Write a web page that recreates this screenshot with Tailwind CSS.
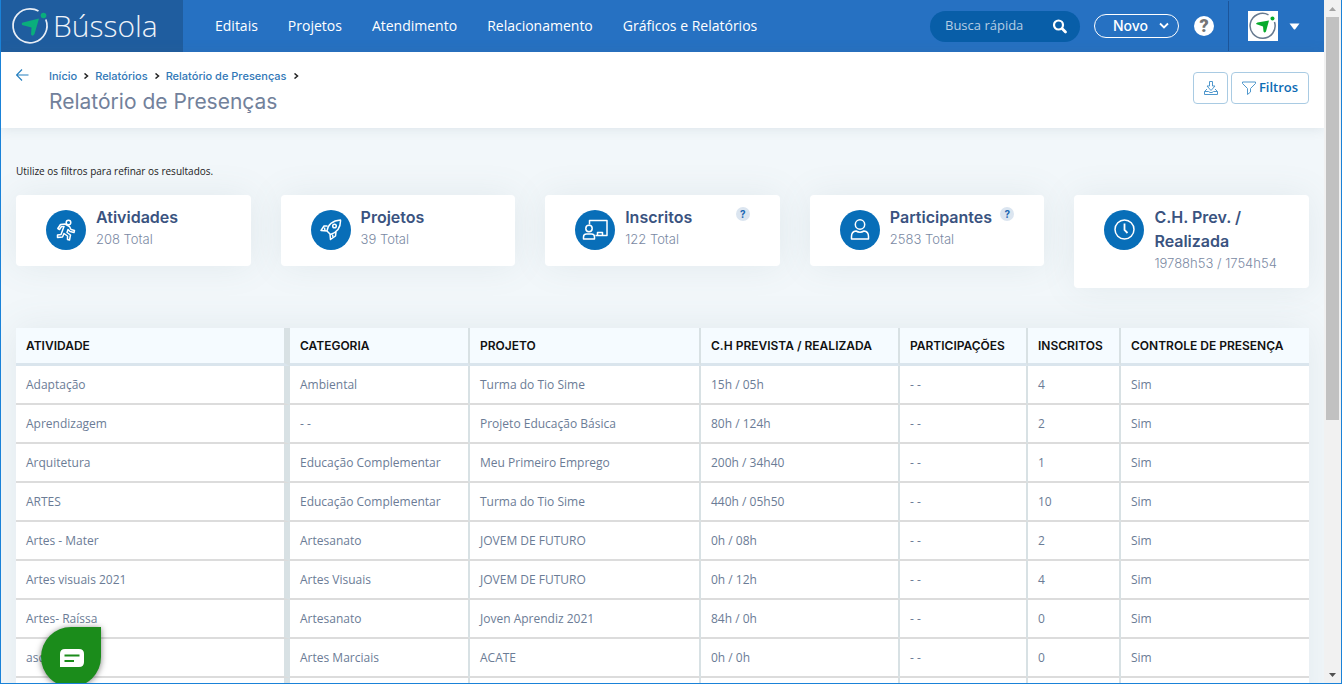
<!DOCTYPE html>
<html lang="pt-BR">
<head>
  <meta charset="UTF-8">
  <meta name="viewport" content="width=device-width, initial-scale=1.0">
  <title>Relatório de Presenças</title>
  <script src="https://cdn.jsdelivr.net/npm/@tailwindcss/browser@4"></script>
</head>
<body class="flex h-screen overflow-hidden border-x border-b border-[#1a82d8] bg-[#f2f7fa] font-['Open_Sans',sans-serif]">

  <div class="flex min-w-0 flex-1 flex-col overflow-hidden">

    <!-- Top bar -->
    <header class="flex h-[52px] shrink-0 items-stretch bg-[#2671c2] text-white">
      <a href="#" class="flex w-[182px] shrink-0 items-center gap-[2px] bg-[#1f5d9f] pl-[10px]">
        <svg class="size-10 shrink-0" viewBox="0 0 40 40" fill="none" aria-hidden="true">
          <path d="M27.500 5Q24 2.800 19 2.800A17 17 0 1 0 34.800 13.500" stroke="#e8eef6" stroke-width="1.700"/>
          <path d="M11 19Q10 16.500 13 16.300L28 12.500L23.500 28Q21.500 31 20 28.500L20.500 21.500Z" fill="#0aae7c"/>
          <circle cx="32.500" cy="9.500" r="2.800" fill="#0aae7c"/>
        </svg>
        <span class="text-[30px] font-light leading-10 text-[#eef3f9]">Bússola</span>
      </a>

      <nav class="flex items-center gap-[30px] pl-8 text-sm">
        <a href="#">Editais</a>
        <a href="#">Projetos</a>
        <a href="#">Atendimento</a>
        <a href="#">Relacionamento</a>
        <a href="#">Gráficos e Relatórios</a>
      </nav>

      <div class="ml-auto flex items-center">
        <form class="flex h-[31px] w-[150px] items-center rounded-full bg-[#085ea8] pl-[15px] pr-3">
          <input type="search" aria-label="Busca rápida" placeholder="Busca rápida" class="min-w-0 flex-1 bg-transparent text-[13px] outline-none placeholder:text-[#b5cde4]">
          <button type="button" aria-label="Buscar">
            <svg class="size-4" viewBox="0 0 16 16" fill="none" stroke="#fff" stroke-linecap="round">
              <circle cx="6.500" cy="7" r="4.500" stroke-width="2.200"/>
              <path d="M10.300 10.800L13.500 14" stroke-width="2.800"/>
            </svg>
          </button>
        </form>
        <button type="button" class="ml-[14px] flex h-6 w-[85px] items-center justify-between rounded-full border border-white pl-[18px] pr-[9px] font-['Inter',sans-serif] text-sm font-medium">
          Novo
          <svg class="size-[10px]" viewBox="0 0 10 10" fill="none" stroke="#fff" stroke-width="1.800" aria-hidden="true"><path d="M1 2.500L5 6.500L9 2.500"/></svg>
        </button>
        <button type="button" aria-label="Ajuda" class="ml-[15px] flex size-5 items-center justify-center rounded-full bg-white font-['Roboto',sans-serif] text-lg font-black leading-5 text-[#757575]">?</button>
        <div class="ml-[14px] h-[50px] w-px bg-[#1c559a]"></div>
        <button type="button" aria-label="Conta" class="ml-[19px] mr-6 flex items-center gap-[11px]">
          <svg class="size-[30px] bg-white" viewBox="0 0 30 30" fill="none" aria-hidden="true">
            <path d="M20.500 3.800A12.500 12.500 0 1 0 26.500 11" stroke="#66798f" stroke-width="1.500"/>
            <path d="M8 13Q8 12 9.500 11.500L21 9.500L18 20.500Q16.500 22.500 15.500 20.500L15 15.500Z" fill="#07ab2c"/>
            <circle cx="24.500" cy="7.500" r="2" fill="#07ab2c"/>
          </svg>
          <svg class="h-[7px] w-[11px]" viewBox="0 0 11 7" fill="#fff" aria-hidden="true"><path d="M0.500 0.500H10.500L6.200 6.200Q5.500 7 4.800 6.200Z"/></svg>
        </button>
      </div>
    </header>

    <!-- Page heading -->
    <div class="flex h-[76px] shrink-0 items-start justify-between bg-white px-[15px] shadow-[0_0_12px_rgba(70,100,120,0.14)]">
      <div class="flex gap-5 pt-[15px]">
        <a href="#" aria-label="Voltar" class="pt-[2px]">
          <svg class="h-3 w-[13px]" viewBox="0 0 13 12" fill="none" stroke="#2680c0" stroke-width="1.200"><path d="M12.500 6H0.500M6 0.500L0.500 6L6 11.500"/></svg>
        </a>
        <div class="font-['Inter',sans-serif]">
          <nav class="flex h-[18px] items-center gap-[6px] text-[11px] font-medium text-[#3178b7]">
            <a href="#">Início</a>
            <svg class="size-[6px]" viewBox="0 0 6 6" fill="none" stroke="#222" stroke-width="1.500"><path d="M1.500 0.500L4.500 3L1.500 5.500"/></svg>
            <a href="#">Relatórios</a>
            <svg class="size-[6px]" viewBox="0 0 6 6" fill="none" stroke="#222" stroke-width="1.500"><path d="M1.500 0.500L4.500 3L1.500 5.500"/></svg>
            <a href="#">Relatório de Presenças</a>
            <svg class="size-[6px]" viewBox="0 0 6 6" fill="none" stroke="#222" stroke-width="1.500"><path d="M1.500 0.500L4.500 3L1.500 5.500"/></svg>
          </nav>
          <h1 class="pt-[2px] text-[21px] leading-[30px] text-[#72819b]">Relatório de Presenças</h1>
        </div>
      </div>
      <div class="flex gap-[3px] pt-5">
        <button type="button" aria-label="Exportar" class="flex h-8 w-[35px] items-center justify-center rounded border border-[#a9cbe3]">
          <svg class="size-[14px]" viewBox="0 0 14 14" fill="none" stroke="#4f97cc" stroke-width="1" stroke-linejoin="round">
            <path d="M5.500 0.500H8.500V5H11L7 9.500L3 5H5.500ZM3 8L0.500 10.500V13.500H13.500V10.500L11 8M0.500 10.500H4.500L6 11.500H8L9.500 10.500H13.500"/>
          </svg>
        </button>
        <button type="button" class="flex h-8 w-[78px] items-center justify-center gap-[3px] rounded border border-[#a9cbe3] text-[13px] font-semibold text-[#0d6cb4]">
          <svg class="size-[14px]" viewBox="0 0 14 14" fill="none" stroke="#4f97cc" stroke-width="1" stroke-linejoin="round" aria-hidden="true"><path d="M0.500 1H13.500V2.500L8.500 7.500V11L5.500 13.500V7.500L0.500 2.500Z"/></svg>
          Filtros
        </button>
      </div>
    </div>

    <main class="px-[15px] pt-[35px]">
      <p class="text-[10px] leading-4 text-[#222]">Utilize os filtros para refinar os resultados.</p>

      <!-- Totals -->
      <section class="mt-4 grid min-h-[93px] grid-cols-5 items-start gap-[30px] font-['Inter',sans-serif]">
        <article class="flex gap-[10px] rounded bg-white px-[30px] shadow-[0_0_35px_rgba(100,130,140,0.11)]">
          <div class="mb-4 mt-[15px] flex size-10 shrink-0 items-center justify-center rounded-full bg-[#086eb8]">
            <svg class="size-[22px]" viewBox="0 0 22 22" fill="none" stroke="#fff" stroke-width="1.500" stroke-linejoin="round" aria-hidden="true">
              <circle cx="13.500" cy="3.500" r="2.300"/>
              <path d="M5.500 5.500L10 5L14.500 7.500L16 10.500L19.500 11.500L19 13.500L15 12.500L13 10.500L12 13.500L15.500 16L14.500 21L12.500 20.500L12.500 17L9 14.500L7.500 18L2.500 18.500L2.500 16L6 15.500L9 7.500L6.500 7.500L4.500 10.500L2.800 9.500Z"/>
            </svg>
          </div>
          <div class="pb-[15px] pt-[10px]">
            <h2 class="text-base font-semibold leading-6 text-[#3a5380]">Atividades</h2>
            <p class="text-[13px] font-light leading-5 text-[#7a89a3]">208 Total</p>
          </div>
        </article>

        <article class="flex gap-[10px] rounded bg-white px-[30px] shadow-[0_0_35px_rgba(100,130,140,0.11)]">
          <div class="mb-4 mt-[15px] flex size-10 shrink-0 items-center justify-center rounded-full bg-[#086eb8]">
            <svg class="size-[22px]" viewBox="0 0 22 22" fill="none" stroke="#fff" stroke-width="1.500" stroke-linejoin="round" aria-hidden="true">
              <path d="M7 12Q8.500 2 20.500 1Q21 12 10.500 15.500ZM7.500 7H4L1 11.500L7 12M16 13L15.500 17L10.500 20.500L10 15.500"/>
              <circle cx="14.500" cy="7" r="1.800"/>
              <path d="M4.500 8.500L5 12"/>
              <path d="M12.500 15.500L13 18.500"/>
            </svg>
          </div>
          <div class="pb-[15px] pt-[10px]">
            <h2 class="text-base font-semibold leading-6 text-[#3a5380]">Projetos</h2>
            <p class="text-[13px] font-light leading-5 text-[#7a89a3]">39 Total</p>
          </div>
        </article>

        <article class="flex gap-[10px] rounded bg-white px-[30px] shadow-[0_0_35px_rgba(100,130,140,0.11)]">
          <div class="mb-4 mt-[15px] flex size-10 shrink-0 items-center justify-center rounded-full bg-[#086eb8]">
            <svg class="h-[22px] w-[26px]" viewBox="0 0 26 22" fill="none" stroke="#fff" stroke-width="1.500" stroke-linejoin="round" aria-hidden="true">
              <path d="M7.500 5.500V1.500H25V16.500H13.500M15.500 16V13.500H20.500V16"/>
              <circle cx="7" cy="9.500" r="3.200"/>
              <path d="M1.500 20V18Q1.500 15 4.500 15H9.500Q12.500 15 12.500 18V20Z"/>
            </svg>
          </div>
          <div class="pb-[15px] pt-[10px]">
            <h2 class="text-base font-semibold leading-6 text-[#3a5380]">Inscritos</h2>
            <p class="text-[13px] font-light leading-5 text-[#7a89a3]">122 Total</p>
          </div>
          <button type="button" aria-label="Ajuda sobre inscritos" class="ml-auto mt-3 flex size-[14px] shrink-0 items-center justify-center rounded-full bg-[#dbe5f0] text-[10px] font-bold text-[#1c68b3]">?</button>
        </article>

        <article class="flex gap-[5px] rounded bg-white px-[30px] shadow-[0_0_35px_rgba(100,130,140,0.11)]">
          <div class="mb-4 mr-[5px] mt-[15px] flex size-10 shrink-0 items-center justify-center rounded-full bg-[#086eb8]">
            <svg class="size-[22px]" viewBox="0 0 22 22" fill="none" stroke="#fff" stroke-width="1.500" stroke-linejoin="round" aria-hidden="true">
              <circle cx="11" cy="5.500" r="4.700"/>
              <path d="M2.500 20V17.500Q2.500 12.500 7 12Q11 14.500 15 12Q19.500 12.500 19.500 17.500V20Z"/>
            </svg>
          </div>
          <div class="pb-[15px] pt-[10px]">
            <h2 class="text-base font-semibold leading-6 text-[#3a5380]">Participantes</h2>
            <p class="text-[13px] font-light leading-5 text-[#7a89a3]">2583 Total</p>
          </div>
          <button type="button" aria-label="Ajuda sobre participantes" class="ml-auto mt-3 flex size-[14px] shrink-0 items-center justify-center rounded-full bg-[#dbe5f0] text-[10px] font-bold text-[#1c68b3]">?</button>
        </article>

        <article class="flex gap-[10px] rounded bg-white px-[30px] shadow-[0_0_35px_rgba(100,130,140,0.11)]">
          <div class="mb-4 mt-[15px] flex size-10 shrink-0 items-center justify-center rounded-full bg-[#086eb8]">
            <svg class="size-[22px]" viewBox="0 0 22 22" fill="none" stroke="#fff" stroke-width="1.500" aria-hidden="true">
              <circle cx="11.500" cy="10.500" r="9.500"/>
              <path d="M11.500 4.500V11L14.500 14" stroke-width="1.800"/>
            </svg>
          </div>
          <div class="pb-[15px] pt-[10px]">
            <h2 class="text-base font-semibold leading-6 text-[#3a5380]">C.H. Prev. / Realizada</h2>
            <p class="whitespace-nowrap text-[13px] font-light leading-5 text-[#7a89a3]">19788h53 / 1754h54</p>
          </div>
        </article>
      </section>

      <!-- Report table -->
      <table class="mt-10 w-full table-fixed border-separate border-spacing-0 bg-white text-left shadow-[0_0_35px_rgba(100,130,140,0.11)]">
        <colgroup>
          <col class="w-[274px]">
          <col class="w-[180px]">
          <col class="w-[231px]">
          <col class="w-[199px]">
          <col class="w-[128px]">
          <col class="w-[93px]">
          <col>
        </colgroup>
        <thead class="bg-[#f5fbff] font-['Inter',sans-serif] text-xs uppercase text-[#111]">
          <tr class="h-[38px] *:border-b-[3px] *:border-r-2 *:border-b-[#dae5ed] *:border-r-[#d8e1e4] *:pl-[10px] *:font-semibold">
            <th class="border-r-[6px]!">Atividade</th>
            <th>Categoria</th>
            <th>Projeto</th>
            <th>C.H Prevista / Realizada</th>
            <th>Participações</th>
            <th>Inscritos</th>
            <th class="border-r-0!">Controle de presença</th>
          </tr>
        </thead>
        <tbody id="rows" class="text-xs text-[#6b7c96]"></tbody>
      </table>
    </main>
  </div>

  <!-- Scrollbar -->
  <div class="flex w-[17px] shrink-0 flex-col items-center bg-[#f1f1f1]" aria-hidden="true">
    <div class="flex h-[17px] items-center"><svg class="h-1 w-[7px]" viewBox="0 0 7 4" fill="#a3a3a3"><path d="M3.500 0L7 4H0Z"/></svg></div>
    <div class="h-[59%] w-[13px] bg-[#c1c1c1]"></div>
    <div class="mt-auto flex h-[17px] items-center"><svg class="h-1 w-[7px]" viewBox="0 0 7 4" fill="#505050"><path d="M3.500 4L7 0H0Z"/></svg></div>
  </div>

  <!-- Chat button, partly below the fold -->
  <div class="pointer-events-none absolute inset-x-px bottom-px top-0 overflow-hidden">
    <button type="button" aria-label="Abrir chat" class="pointer-events-auto absolute -bottom-1 left-10 flex size-[60px] items-center justify-center rounded-full rounded-tr-[7px] bg-[#1b8c1b] pl-[2px] pt-[2px] shadow-[0_1px_6px_rgba(0,0,0,0.5)]">
      <svg class="h-[18px] w-6" viewBox="0 0 24 18" aria-hidden="true">
        <path d="M5 0H19Q24 0 24 5V13Q24 18 19 18H0V5Q0 0 5 0Z" fill="#fff"/>
        <path d="M4.500 6.500H19.500M4.500 12H14" stroke="#1b8c1b" stroke-width="1.800"/>
      </svg>
    </button>
  </div>

  <script>
    const rows = [
      ['Adaptação', 'Ambiental', 'Turma do Tio Sime', '15h / 05h', '- -', '4', 'Sim'],
      ['Aprendizagem', '- -', 'Projeto Educação Básica', '80h / 124h', '- -', '2', 'Sim'],
      ['Arquitetura', 'Educação Complementar', 'Meu Primeiro Emprego', '200h / 34h40', '- -', '1', 'Sim'],
      ['ARTES', 'Educação Complementar', 'Turma do Tio Sime', '440h / 05h50', '- -', '10', 'Sim'],
      ['Artes - Mater', 'Artesanato', 'JOVEM DE FUTURO', '0h / 08h', '- -', '2', 'Sim'],
      ['Artes visuais 2021', 'Artes Visuais', 'JOVEM DE FUTURO', '0h / 12h', '- -', '4', 'Sim'],
      ['Artes- Raíssa', 'Artesanato', 'Joven Aprendiz 2021', '84h / 0h', '- -', '0', 'Sim'],
      ['asd', 'Artes Marciais', 'ACATE', '0h / 0h', '- -', '0', 'Sim'],
      ['', '', '', '', '', '', ''],
    ];

    document.getElementById('rows').innerHTML = rows.map(cells => `
      <tr class="h-[39px] *:border-b-2 *:border-r-2 *:border-b-[#dcdcdc] *:border-r-[#d8e1e4] *:pl-[10px]">
        ${cells.map(cell => `<td class="first:border-r-[6px]! last:border-r-0!">${cell}</td>`).join('')}
      </tr>`).join('');
  </script>
</body>
</html>
